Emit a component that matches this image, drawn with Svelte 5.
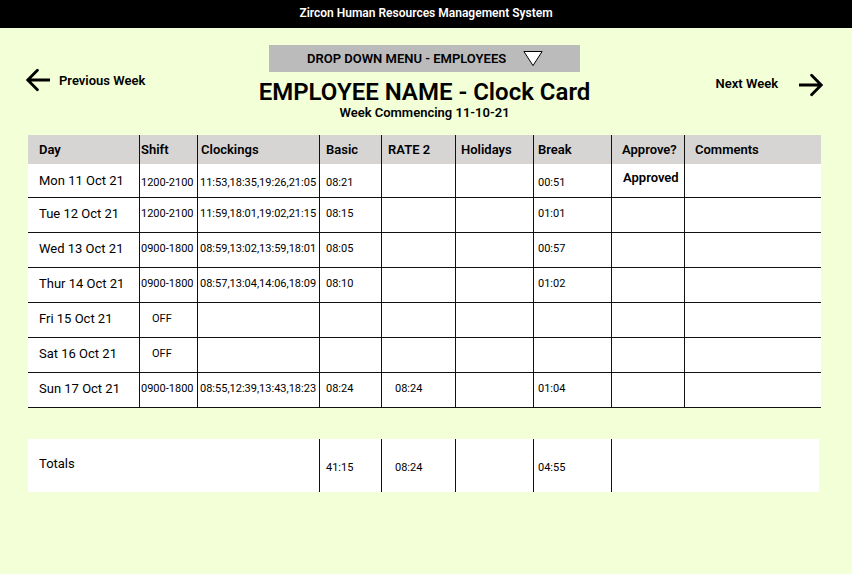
<script>
  const columns = ['Day', 'Shift', 'Clockings', 'Basic', 'RATE 2', 'Holidays', 'Break', 'Approve?', 'Comments'];
  const keys = ['day', 'shift', 'clock', 'basic', 'rate', 'holidays', 'break', 'approve', 'comments'];

  const rows = [
    ['Mon 11 Oct 21', '1200-2100', '11:53,18:35,19:26,21:05', '08:21', '', '', '00:51', 'Approved', ''],
    ['Tue 12 Oct 21', '1200-2100', '11:59,18:01,19:02,21:15', '08:15', '', '', '01:01', '', ''],
    ['Wed 13 Oct 21', '0900-1800', '08:59,13:02,13:59,18:01', '08:05', '', '', '00:57', '', ''],
    ['Thur 14 Oct 21', '0900-1800', '08:57,13:04,14:06,18:09', '08:10', '', '', '01:02', '', ''],
    ['Fri 15 Oct 21', 'OFF', '', '', '', '', '', '', ''],
    ['Sat 16 Oct 21', 'OFF', '', '', '', '', '', '', ''],
    ['Sun 17 Oct 21', '0900-1800', '08:55,12:39,13:43,18:23', '08:24', '08:24', '', '01:04', '', '']
  ];
</script>

<div class="topbar">Zircon Human Resources Management System</div>

<main>
  <header>
    <a class="week prev" href="#previous">
      <svg width="24" height="24" viewBox="0 0 24 24" aria-hidden="true">
        <path d="M24 12H2M11.4 2.2L1.8 12L11.4 21.8" />
      </svg>
      Previous Week
    </a>
    <div class="heading">
      <div class="picker">
        <select aria-label="Employee">
          <option>DROP DOWN MENU - EMPLOYEES</option>
        </select>
        <svg width="20" height="16" viewBox="0 0 20 16" aria-hidden="true">
          <path d="M0.9 0.5H19.1L10 14.6Z" />
        </svg>
      </div>
      <h1>EMPLOYEE NAME - Clock Card</h1>
      <p>Week Commencing 11-10-21</p>
    </div>
    <a class="week next" href="#next">
      <span>Next Week</span>
      <svg width="24" height="24" viewBox="0 0 24 24" aria-hidden="true">
        <path d="M0 12H22M12.6 2.2L22.2 12L12.6 21.8" />
      </svg>
    </a>
  </header>

  <table class="card">
    <colgroup>
      {#each keys as key}<col class={key} />{/each}
    </colgroup>
    <thead>
      <tr>
        {#each columns as column, i}<th scope="col" class={keys[i]}>{column}</th>{/each}
      </tr>
    </thead>
    <tbody>
      {#each rows as row}
        <tr>
          {#each row as cell, i}
            <td class={keys[i]} class:off={cell === 'OFF'}>{cell}</td>
          {/each}
        </tr>
      {/each}
    </tbody>
  </table>

  <table class="totals">
    <colgroup>
      <col class="label" /><col class="basic" /><col class="rate" /><col class="holidays" /><col class="break" /><col />
    </colgroup>
    <tbody>
      <tr>
        <th scope="row" class="day">Totals</th>
        <td class="basic">41:15</td>
        <td class="rate">08:24</td>
        <td class="holidays"></td>
        <td class="break">04:55</td>
        <td></td>
      </tr>
    </tbody>
  </table>
</main>

<style>
  :global(body) {
    background: #f2ffd7;
    color: #000;
    font-family: Roboto, sans-serif;
    font-size: 13px;
  }

  .topbar {
    height: 28px;
    line-height: 26px;
    background: #000;
    color: #fff;
    text-align: center;
    font-size: 12px;
    font-weight: 600;
  }

  header {
    display: grid;
    grid-template-columns: 1fr auto 1fr;
    padding: 17px 29px 0 26px;
  }

  .week {
    display: flex;
    align-items: center;
    height: 24px;
    color: inherit;
    font-weight: 600;
    text-decoration: none;
  }

  .week path {
    fill: none;
    stroke: #000;
    stroke-width: 2.8;
    stroke-linecap: round;
  }

  .prev {
    gap: 9px;
    justify-self: start;
    margin-top: 23px;
  }

  .next {
    gap: 21px;
    justify-self: end;
    margin-top: 28px;
  }

  .next span {
    padding-bottom: 4px;
  }

  .heading {
    display: flex;
    flex-direction: column;
    align-items: center;
  }

  .picker {
    position: relative;
    width: 311px;
    height: 27px;
  }

  select {
    appearance: none;
    width: 100%;
    height: 100%;
    padding: 0 0 0 38px;
    border: 0;
    border-radius: 0;
    background: #bbb;
    color: #000;
    font: 600 13px Roboto, sans-serif;
  }

  .picker svg {
    position: absolute;
    top: 6px;
    right: 37px;
    pointer-events: none;
  }

  .picker path {
    fill: #fff;
    stroke: #000;
  }

  h1 {
    margin: 6px 0 0;
    font-size: 24px;
    font-weight: 600;
    line-height: 28px;
  }

  p {
    margin: 0;
    font-weight: 600;
    line-height: 14px;
  }

  table {
    table-layout: fixed;
    border-collapse: separate;
    border-spacing: 0;
    background: #fff;
  }

  .card {
    width: calc(100% - 59px);
    margin: 15px 31px 0 28px;
  }

  .totals {
    width: calc(100% - 61px);
    margin: 31px 33px 0 28px;
  }

  col.day { width: 112px; }
  col.shift { width: 58px; }
  col.clock { width: 122px; }
  col.label { width: 292px; }
  col.basic { width: 62px; }
  col.rate { width: 74px; }
  col.holidays,
  col.break { width: 78px; }
  col.approve { width: 73px; }

  th,
  td {
    box-sizing: border-box;
    padding: 0 0 0 6px;
    border-right: 1px solid #111;
    text-align: left;
    white-space: nowrap;
  }

  th:last-child,
  td:last-child {
    border-right: 0;
  }

  th {
    height: 29px;
    background: #d7d5d4;
    font-weight: 600;
  }

  td {
    height: 35px;
    padding-bottom: 3px;
    border-bottom: 1px solid #111;
    font-size: 11px;
  }

  .card tbody tr:first-child td {
    height: 34px;
    padding-top: 4px;
    padding-bottom: 0;
  }

  .card tbody tr:first-child td.day {
    padding-top: 0;
  }

  .card tbody tr:first-child td.approve {
    padding-top: 0;
    padding-bottom: 6px;
  }

  .day { padding-left: 11px; }
  .shift { padding-left: 1px; }
  .clock { padding-left: 2px; }
  .break { padding-left: 4px; }
  .approve,
  .comments { padding-left: 10px; }
  th.clock { padding-left: 3px; }
  th.rate { padding-left: 6px; }
  th.holidays { padding-left: 5px; }
  td.rate { padding-left: 13px; }
  td.off { padding-left: 12px; }
  td.day { font-size: 13px; }

  td.approve {
    padding-left: 11px;
    font-size: 13px;
    font-weight: 600;
  }

  .totals th,
  .totals td {
    height: 53px;
    border-bottom: 0;
    background: #fff;
  }

  .totals th {
    padding-bottom: 4px;
    font-weight: 400;
  }

  .totals td {
    padding-top: 4px;
    padding-bottom: 0;
  }
</style>
